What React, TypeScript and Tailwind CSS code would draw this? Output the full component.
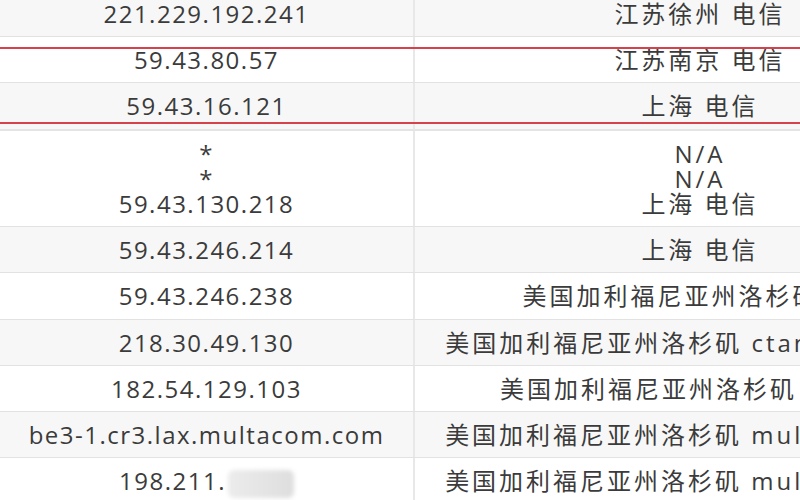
const rows: { ip: string[]; loc: string[]; masked?: boolean; thick?: boolean }[] = [
  { ip: ['221.229.192.241'], loc: ['江苏徐州 电信'] },
  { ip: ['59.43.80.57'], loc: ['江苏南京 电信'] },
  { ip: ['59.43.16.121'], loc: ['上海 电信'], thick: true },
  { ip: ['*', '*', '59.43.130.218'], loc: ['N/A', 'N/A', '上海 电信'] },
  { ip: ['59.43.246.214'], loc: ['上海 电信'] },
  { ip: ['59.43.246.238'], loc: ['美国加利福尼亚州洛杉矶 cn2'] },
  { ip: ['218.30.49.130'], loc: ['美国加利福尼亚州洛杉矶 ctamerica.com'] },
  { ip: ['182.54.129.103'], loc: ['美国加利福尼亚州洛杉矶 cogent'] },
  { ip: ['be3-1.cr3.lax.multacom.com'], loc: ['美国加利福尼亚州洛杉矶 multacom.com'] },
  { ip: ['198.211.'], loc: ['美国加利福尼亚州洛杉矶 multacom.com'], masked: true },
];

export default function App() {
  return (
    <div
      className="relative w-[800px] h-[500px] overflow-hidden bg-white text-[#3b3b3b] text-[24px]"
      style={{ fontFamily: '"Open Sans", "Noto Sans CJK SC", sans-serif' }}
    >
      <div className="w-[985px] -mt-[9px]">
        {rows.map((row, i) => (
          <div
            key={i}
            className={`flex ${i % 2 === 0 ? 'bg-[#f7f7f7]' : 'bg-white'} ${
              row.thick ? 'border-b-2 border-[#e4e4e4]' : 'border-b border-[#e2e2e2]'
            }`}
          >
            {/* IP / host */}
            <div className="w-[413px] shrink-0 py-[10px] leading-[25.2px] text-center tracking-[1.5px] whitespace-nowrap">
              {row.ip.map((t, j) => (
                <div key={j}>
                  {t}
                  {row.masked && (
                    <span className="inline-block align-middle w-[66px] h-[28px] ml-[2px] rounded-md bg-gradient-to-r from-[#ececec] to-[#dedede] blur-[2px]" />
                  )}
                </div>
              ))}
            </div>
            {/* Location */}
            <div className="flex-1 border-l-2 border-[#e8e8e8] py-[10px] leading-[25.2px] text-center tracking-[3px] whitespace-nowrap">
              {row.loc.map((t, j) => (
                <div key={j}>{t}</div>
              ))}
            </div>
          </div>
        ))}
      </div>

      {/* red annotation box */}
      <div className="absolute top-[47px] left-[-10px] right-[-10px] h-[77px] border-2 border-[#d4434c] pointer-events-none" />
    </div>
  );
}
